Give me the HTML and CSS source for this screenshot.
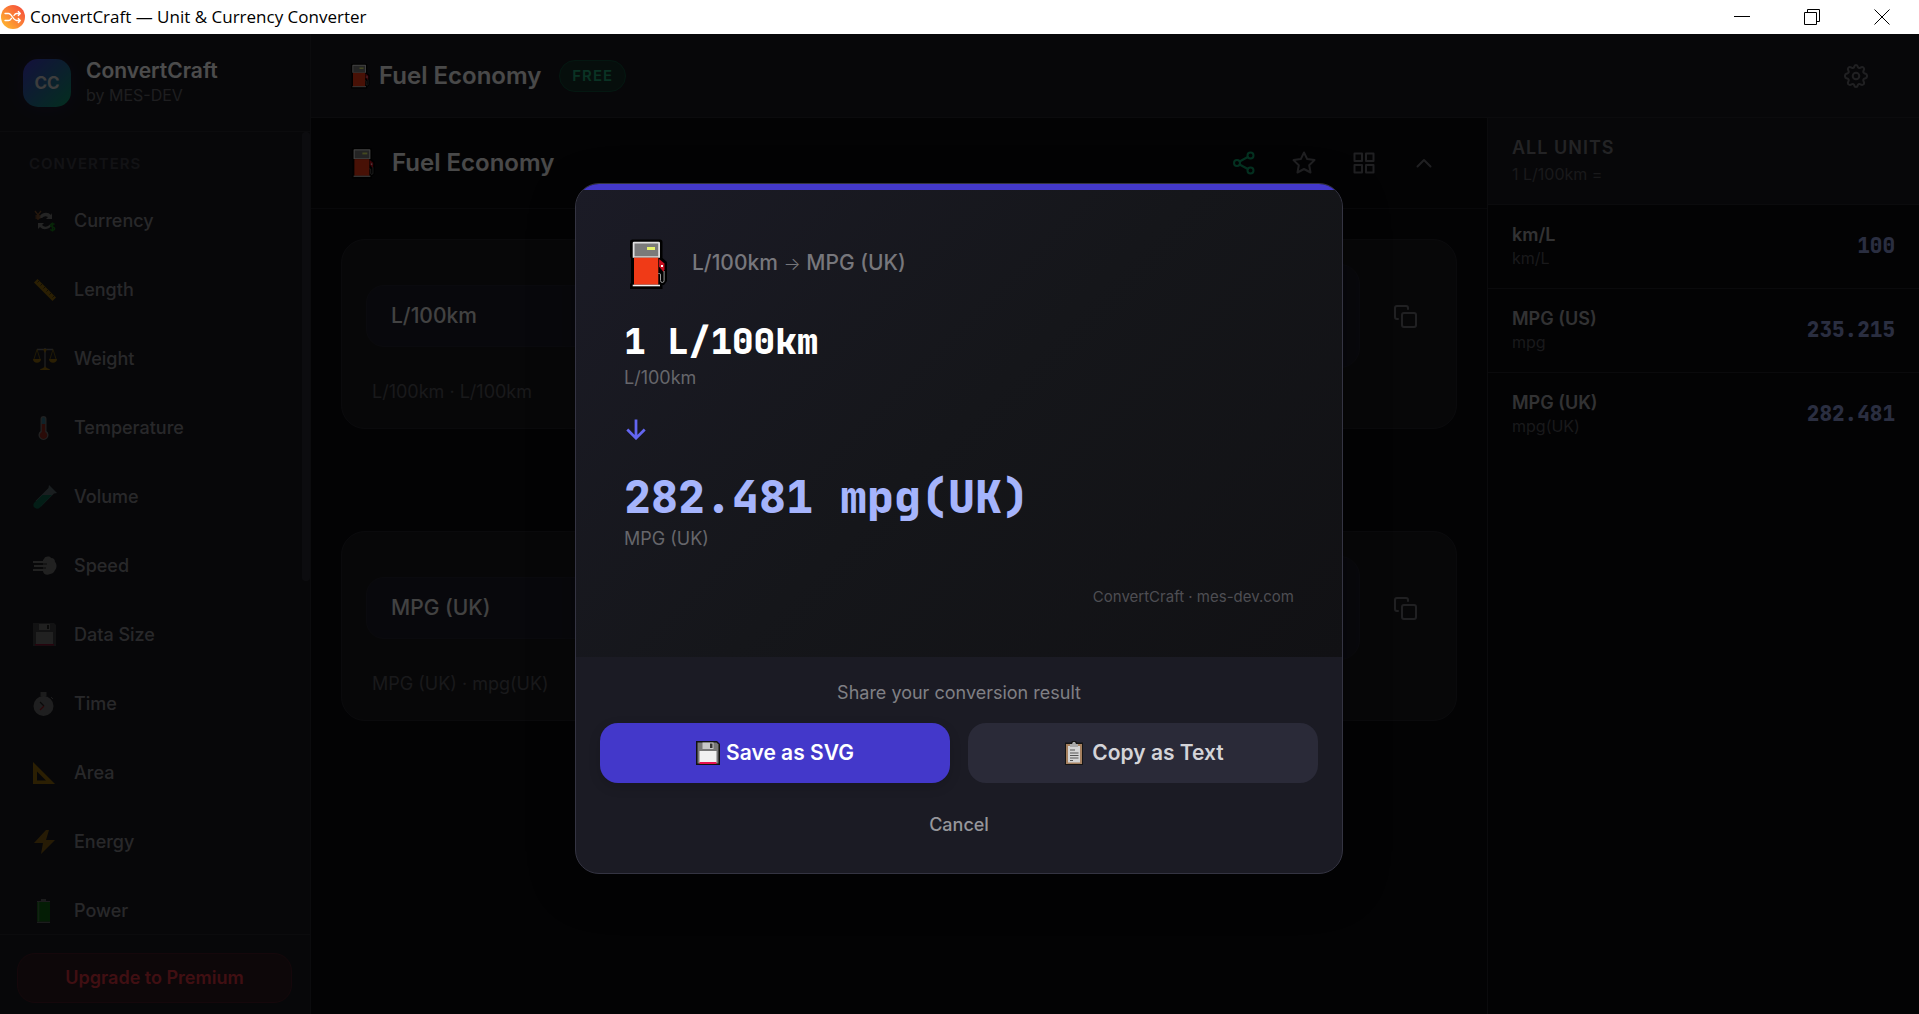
FILE: index.html
```html
<!DOCTYPE html>
<html lang="en">
<head>
    <meta charset="UTF-8">
    <meta name="viewport" content="width=device-width, initial-scale=1.0">
    <title>ConvertCraft — Unit &amp; Currency Converter</title>
    <link rel="stylesheet" href="styles.css">
</head>
<body>
    <svg class="defs" width="0" height="0" aria-hidden="true">
        <symbol id="pump" viewBox="0 0 48 52">
            <path d="M9 1.500h27a2.500 2.500 0 0 1 2.500 2.500v16l4.500 4v19l-3 4h-1.500v4H6v-5l1-1V20l-1-1V4a2.500 2.500 0 0 1 3-2.500z" fill="#000"/>
            <path d="M8.700 5a1.300 1.300 0 0 1 1.300-1.300h24.700A1.300 1.300 0 0 1 36 5v14.700H8.700z" fill="#dedede"/>
            <path d="M10.500 5.500h23.700v12.800H10.500z" fill="#7a7a7a"/>
            <path d="M23 9h8v3h-8z" fill="#e5f36b"/>
            <path d="M10 19.700h24.300v27H10z" fill="#f03a17"/>
            <path d="M8.700 46.700H36v1.600H8.700z" fill="#eee"/>
            <path d="M35 21l5.500 4.500v6L39.500 34 35 28.500z" fill="#c50f1f"/>
            <path d="M37 27h2v2h-2z" fill="#fff"/>
            <path d="M34.300 35.500h1.200q1 0 1 1.500v5.500q0 2 1.800 2t1.800-2V33" fill="none" stroke="#999" stroke-width="1"/>
        </symbol>
        <symbol id="floppy" viewBox="0 0 24 24">
            <path d="M0 0h21l3 3v21H0z" fill="#111"/>
            <path d="M1.500 1.500h19l2 2v19h-21z" fill="#777"/>
            <path d="M6.500 1.500h11V8h-11z" fill="#c8c8c8"/>
            <path d="M14 2.500h2.500v4.500H14z" fill="#333"/>
            <path d="M3.500 10h17v12h-17z" fill="#f2f2f2"/>
            <path d="M3.500 21h17v2h-17z" fill="#e8114f"/>
        </symbol>
        <symbol id="clipboard" viewBox="0 0 24 24">
            <path d="M3 1.500h6l1-1.500h4l1 1.500h6V24H3z" fill="#151515"/>
            <path d="M4 3h16v20H4z" fill="#a5805f"/>
            <path d="M6 5h12v16.500H6z" fill="#d4d4d4"/>
            <path d="M8 3h2l1-2h2l1 2h2v3H8z" fill="#aaa"/>
            <path d="M8 9h5M8 12h8.500M8 14.500h8.500M8 17h8.500M8 19.500h3" stroke="#555" stroke-width="1.200"/>
        </symbol>
        <symbol id="copy" viewBox="0 0 24 24">
            <rect x="9" y="9" width="14" height="14" rx="2"/>
            <path d="M5 15H4a2 2 0 0 1-2-2V4a2 2 0 0 1 2-2h9a2 2 0 0 1 2 2v1"/>
        </symbol>
    </svg>

    <header class="titlebar">
        <svg class="app-icon" viewBox="0 0 24 24" width="24" height="24">
            <defs>
                <linearGradient id="appGrad" x1="0" y1="1" x2="1" y2="0">
                    <stop offset="0" stop-color="#ffc22e"/>
                    <stop offset="0.5" stop-color="#fb8236"/>
                    <stop offset="1" stop-color="#f4433c"/>
                </linearGradient>
            </defs>
            <circle cx="12" cy="12" r="12" fill="url(#appGrad)"/>
            <path d="M4 8.500h3.500c3.500 0 4.500 7 8 7H19M4 15.500h3.500c1.300 0 2.200-1 2.900-2.200M13 10.500c.7-1.100 1.500-2 2.500-2H19M17.300 6.500l2 2-2 2M17.300 13.500l2 2-2 2" fill="none" stroke="#fff" stroke-width="1.300" stroke-linecap="round" stroke-linejoin="round"/>
        </svg>
        <span class="window-title">ConvertCraft — Unit &amp; Currency Converter</span>
        <div class="window-controls">
            <button type="button" aria-label="Minimize"><svg viewBox="0 0 16 16" width="16" height="16"><path d="M0 7.500h16"/></svg></button>
            <button type="button" aria-label="Restore"><svg viewBox="0 0 16 16" width="16" height="16"><path d="M.5 3.500h12v12H.5zM3.500 3.500v-3h12v12h-3"/></svg></button>
            <button type="button" aria-label="Close"><svg viewBox="0 0 16 16" width="16" height="16"><path d="M.5.5l15 15M15.500.5l-15 15"/></svg></button>
        </div>
    </header>

    <div class="app">
        <aside class="sidebar">
            <div class="brand">
                <div class="brand-logo">CC</div>
                <div>
                    <div class="brand-name">ConvertCraft</div>
                    <div class="brand-by">by MES-DEV</div>
                </div>
            </div>
            <nav class="nav">
                <h2 class="nav-title">Converters</h2>
                <a class="nav-item" href="#currency">
                    <svg viewBox="0 0 24 24"><path d="M6 9a7 7 0 0 1 12-3l1-2v6h-6l2-2a5 5 0 0 0-6 1zM19 14a7 7 0 0 1-12 4l-2 2v-6h6l-2 2a5 5 0 0 0 6 1z" fill="#999"/><path d="M2 2l3 4 3-4M5 6v5M2.500 7h5M2.500 9h5" stroke="#a0622d" stroke-width="1.300" fill="none"/><path d="M21.500 15.500c-1-1.200-4-1-4 .8 0 2.200 4.200 1.200 4.200 3.400 0 2-3.400 2-4.400.7M19.500 13.500v9" stroke="#16a316" stroke-width="1.400" fill="none"/></svg>
                    Currency
                </a>
                <a class="nav-item" href="#length">
                    <svg viewBox="0 0 24 24"><path d="M1 4.500L4.500 1 23 19.500 19.500 23z" fill="#b88505"/><path d="M6 3L4.500 4.500M9 6L7.500 7.500M12 9l-1.500 1.500M15 12l-1.500 1.500M18 15l-1.500 1.500M21 18l-1.500 1.500" stroke="#493500"/></svg>
                    Length
                </a>
                <a class="nav-item" href="#weight">
                    <svg viewBox="0 0 24 24"><path d="M12 1v20M4 2.500h16" stroke="#8a8a8a" stroke-width="1.300"/><path d="M4 2.500L1 12M4 2.500L7 12M20 2.500L17 12M20 2.500l3 9.500" stroke="#a0790a" stroke-width=".8"/><path d="M0 12h8c0 5-8 5-8 0zM16 12h8c0 5-8 5-8 0zM7 23c0-2 4-1 5-4 1 3 5 2 5 4zM10 2h4l-2 4z" fill="#b88505"/></svg>
                    Weight
                </a>
                <a class="nav-item" href="#temperature">
                    <svg viewBox="0 0 24 24"><path d="M7.500 3a3 3 0 0 1 6 0v12a5 5 0 1 1-6 0z" fill="#8c8c8c"/><path d="M8.800 3a1.700 1.700 0 0 1 3.400 0v5H8.800z" fill="#3f93ad"/><path d="M8.800 8h3.400v8a3.700 3.700 0 1 1-3.400 0z" fill="#b32a1b"/></svg>
                    Temperature
                </a>
                <a class="nav-item" href="#volume">
                    <svg viewBox="0 0 24 24"><path d="M16 0l8 8-3 .5L8 21.500 2.500 16 15.500 3z" fill="#6d8288"/><path d="M9.500 10h9.500L7 22.500c-4 3.500-9-1.500-5.500-5z" fill="#087a5c"/></svg>
                    Volume
                </a>
                <a class="nav-item" href="#speed">
                    <svg viewBox="0 0 24 24"><path d="M11 5c1-3 6-3 7-1 3 0 4 2 4 4 2 2 2 6 0 8-1 3-4 4-5 4-3 2-7 0-7-3V6z" fill="#8b8b8b"/><path d="M0 8h12M1 12h13M0 16h12" stroke="#8b8b8b" stroke-width="2"/><path d="M1 10h13M1 14h12" stroke="#222" stroke-width="1"/></svg>
                    Speed
                </a>
                <a class="nav-item" href="#data">
                    <svg viewBox="0 0 24 24"><path d="M0 0h21l2 2v21H0z" fill="#4b4b4b"/><path d="M6 1h11v6H6z" fill="#888"/><path d="M14 2h2v4h-2z" fill="#222"/><path d="M3 9h17v12H3z" fill="#8d8d8d"/><path d="M2 21h19v1.500H2z" fill="#a30d38"/></svg>
                    Data Size
                </a>
                <a class="nav-item" href="#time">
                    <svg viewBox="0 0 24 24"><path d="M8 0h5v4H8zM18 5l2 2" stroke="#777" fill="#777"/><circle cx="10.500" cy="14" r="10" fill="#858585"/><path d="M7 10l4 4" stroke="#222" stroke-width="1.200"/><path d="M11 14l-4 4" stroke="#b4151f" stroke-width="1.200"/></svg>
                    Time
                </a>
                <a class="nav-item" href="#area">
                    <svg viewBox="0 0 24 24"><path d="M0 1l22 22H0zM4 10.500V19.500h9z" fill="#b88505" fill-rule="evenodd"/></svg>
                    Area
                </a>
                <a class="nav-item" href="#energy">
                    <svg viewBox="0 0 24 24"><path d="M13 0L1 13h9l-2 11L22 10h-9l3-10z" fill="#a4720f"/></svg>
                    Energy
                </a>
                <a class="nav-item" href="#power">
                    <svg viewBox="0 0 24 24"><path d="M8 0h5v2h4v1.500H4V2h4zM4 22.500h13V24H4z" fill="#777"/><path d="M4 3h13v19.500H4z" fill="#0c7a10"/><path d="M5.500 3v19.500" stroke="#4c8d4e" stroke-width="1.500"/></svg>
                    Power
                </a>
                <div class="scroll-thumb"></div>
            </nav>
            <div class="sidebar-foot">
                <button class="upgrade" type="button">Upgrade to Premium</button>
            </div>
        </aside>

        <div class="content">
            <header class="topbar">
                <svg class="pump-sm"><use href="#pump"/></svg>
                <h1 class="title">Fuel Economy</h1>
                <span class="badge">FREE</span>
                <button class="icon-btn settings" type="button" aria-label="Settings">
                    <svg viewBox="0 0 24 24" width="24" height="24"><path d="M12 1c1 0 1.600.7 1.800 1.700.2 1.100 1.300 1.600 2.300 1.100l1.300-.6c1.700-.5 3 .8 2.600 2.500l-.6 1.500c-.4 1 .2 2 1.200 2.200l1 .3c1.900.8 1.900 3.800 0 4.600l-1 .3c-1 .2-1.600 1.200-1.200 2.200l.6 1.500c.4 1.700-.9 3-2.600 2.500l-1.300-.6c-1-.5-2.100 0-2.300 1.100C13.600 22.300 13 23 12 23s-1.600-.7-1.800-1.700c-.2-1.100-1.300-1.600-2.300-1.100l-1.300.6c-1.700.5-3-.8-2.600-2.500l.6-1.500c.4-1-.2-2-1.200-2.200l-1-.3c-1.900-.8-1.900-3.800 0-4.600l1-.3c1-.2 1.600-1.200 1.200-2.200L4 5.700c-.4-1.700.9-3 2.600-2.500l1.300.6c1 .5 2.100 0 2.300-1.100C10.400 1.700 11 1 12 1z"/><circle cx="12" cy="12" r="3.300"/></svg>
                </button>
            </header>

            <div class="workspace">
                <main class="converter">
                    <div class="converter-head">
                        <svg class="pump-md"><use href="#pump"/></svg>
                        <h2 class="title">Fuel Economy</h2>
                        <div class="tools">
                            <button class="icon-btn share" type="button" aria-label="Share">
                                <svg viewBox="0 0 24 24" width="24" height="24"><circle cx="18.500" cy="4.500" r="3"/><circle cx="5" cy="12" r="3"/><circle cx="18.500" cy="19.500" r="3"/><path d="M7.600 10.500l8.200-4.500M7.600 13.500l8.200 4.500"/></svg>
                            </button>
                            <button class="icon-btn" type="button" aria-label="Favorite">
                                <svg viewBox="0 0 24 24" width="24" height="24"><path d="M12 1.500l3.200 6.600 7.300 1-5.300 5.100 1.300 7.300-6.500-3.500-6.500 3.500 1.300-7.300-5.300-5.100 7.300-1z"/></svg>
                            </button>
                            <button class="icon-btn" type="button" aria-label="Grid view">
                                <svg viewBox="0 0 24 24" width="24" height="24"><path d="M2.500 2.500H10V10H2.500zM14 2.500h7.500V10H14zM2.500 14H10v7.500H2.500zM14 14h7.500v7.500H14z"/></svg>
                            </button>
                            <button class="icon-btn" type="button" aria-label="Collapse">
                                <svg viewBox="0 0 24 24" width="24" height="24"><path d="M5.500 15.500L12 9l6.500 6.500"/></svg>
                            </button>
                        </div>
                    </div>

                    <div class="cards">
                        <section class="card">
                            <div class="card-row">
                                <select class="unit" aria-label="From unit"><option>L/100km</option><option>MPG (UK)</option></select>
                                <input class="amount" type="text" value="1" aria-label="From value">
                                <button class="icon-btn copy" type="button" aria-label="Copy value"><svg width="24" height="24"><use href="#copy"/></svg></button>
                            </div>
                            <p class="card-note">L/100km · L/100km</p>
                        </section>
                        <section class="card">
                            <div class="card-row">
                                <select class="unit" aria-label="To unit"><option>MPG (UK)</option><option>L/100km</option></select>
                                <input class="amount" type="text" value="282.481" aria-label="To value" readonly>
                                <button class="icon-btn copy" type="button" aria-label="Copy value"><svg width="24" height="24"><use href="#copy"/></svg></button>
                            </div>
                            <p class="card-note">MPG (UK) · mpg(UK)</p>
                        </section>
                    </div>
                </main>

                <aside class="units">
                    <div class="units-head">
                        <h2>ALL UNITS</h2>
                        <p>1 L/100km =</p>
                    </div>
                    <ul class="units-list">
                        <li><div><strong>km/L</strong><span>km/L</span></div><b>100</b></li>
                        <li><div><strong>MPG (US)</strong><span>mpg</span></div><b>235.215</b></li>
                        <li><div><strong>MPG (UK)</strong><span>mpg(UK)</span></div><b>282.481</b></li>
                    </ul>
                </aside>
            </div>
        </div>

        <div class="overlay">
            <div class="modal" role="dialog" aria-label="Share your conversion result">
                <div class="preview">
                    <div class="preview-head">
                        <svg class="pump-lg"><use href="#pump"/></svg>
                        <span>L/100km <span class="to-arrow">→</span> MPG (UK)</span>
                    </div>
                    <div class="from-value">1 L/100km</div>
                    <div class="unit-name">L/100km</div>
                    <svg class="arrow" viewBox="0 0 24 24" width="24" height="24"><path d="M12 1.500v20M2.500 12.500l9.500 9.500 9.500-9.500"/></svg>
                    <div class="to-value">282.481 mpg(UK)</div>
                    <div class="unit-name">MPG (UK)</div>
                    <div class="watermark">ConvertCraft · mes-dev.com</div>
                </div>
                <div class="modal-foot">
                    <p>Share your conversion result</p>
                    <div class="actions">
                        <button class="btn primary" type="button"><svg width="24" height="24"><use href="#floppy"/></svg>Save as SVG</button>
                        <button class="btn" type="button"><svg width="24" height="24"><use href="#clipboard"/></svg>Copy as Text</button>
                    </div>
                    <button class="cancel" type="button">Cancel</button>
                </div>
            </div>
        </div>
    </div>
</body>
</html>
```
FILE: styles.css
```css
* {
    box-sizing: border-box;
}
body {
    margin: 0;
    height: 100vh;
    display: flex;
    flex-direction: column;
    overflow: hidden;
    background: #0a0a0f;
    color: #fff;
    font-family: Inter, "Liberation Sans", sans-serif;
    font-size: 18px;
    line-height: 24px;
}
h1, h2, p, ul {
    margin: 0;
    padding: 0;
}
button, input, select {
    font: inherit;
    color: inherit;
    border: none;
    background: none;
    padding: 0;
}
svg {
    flex: none;
}
.defs {
    position: absolute;
}

/* window title bar */
.titlebar {
    display: flex;
    align-items: center;
    gap: 5px;
    flex: none;
    height: 34px;
    padding-left: 1px;
    background: #fff;
    color: #000;
}
.window-title {
    font-family: "Segoe UI", "Open Sans", sans-serif;
    font-size: 17px;
}
.window-controls {
    display: flex;
    margin-left: auto;
    padding-right: 2px;
}
.window-controls button {
    width: 70px;
    height: 34px;
    display: grid;
    place-items: center;
}
.window-controls path {
    fill: none;
    stroke: #000;
}

.app {
    position: relative;
    flex: 1;
    min-height: 0;
    display: flex;
}

/* sidebar */
.sidebar {
    width: 311px;
    flex: none;
    display: flex;
    flex-direction: column;
    background: #19191f;
    border-right: 1px solid #26262d;
}
.brand {
    display: flex;
    align-items: center;
    gap: 15px;
    height: 98px;
    padding: 0 23px;
    border-bottom: 1px solid #26262d;
}
.brand-logo {
    width: 48px;
    height: 48px;
    display: grid;
    place-items: center;
    border-radius: 15px;
    background: linear-gradient(135deg, #4338ca, #0b9a68);
    box-shadow: 0 0 24px rgba(67, 56, 202, 0.2);
    font-size: 17px;
    font-weight: 700;
    color: #ccc;
}
.brand-name {
    font-size: 21px;
    font-weight: 600;
}
.brand-by {
    font-size: 16px;
    color: #66666c;
}
.nav {
    position: relative;
    flex: 1;
    min-height: 0;
    overflow: hidden;
    padding: 20px 12px 0;
}
.nav-title {
    padding-left: 17px;
    margin-bottom: 10px;
    font-size: 15px;
    font-weight: 600;
    line-height: 24px;
    letter-spacing: 1px;
    text-transform: uppercase;
    color: #3e3e46;
}
.nav-item {
    display: flex;
    align-items: center;
    gap: 17px;
    height: 69px;
    padding-left: 21px;
    color: #88888e;
    font-weight: 500;
    text-decoration: none;
}
.nav-item svg {
    width: 24px;
    height: 24px;
    opacity: 0.75;
}
.scroll-thumb {
    position: absolute;
    top: 0;
    right: 0;
    width: 8px;
    height: 56%;
    border-radius: 4px;
    background: #2a2a35;
}
.sidebar-foot {
    padding: 18px 18px 11px 17px;
    border-top: 1px solid #26262d;
}
.upgrade {
    width: 100%;
    height: 50px;
    border: 1px solid #471a26;
    border-radius: 18px;
    background: #2c1820;
    color: #d8323f;
    font-weight: 600;
}

/* top bar and converter */
.content {
    flex: 1;
    min-width: 0;
    display: flex;
    flex-direction: column;
}
.topbar {
    display: flex;
    align-items: center;
    flex: none;
    height: 84px;
    padding: 0 39px 0 37px;
    background: #19191f;
    border-bottom: 1px solid #26262d;
}
.title {
    font-size: 24px;
    font-weight: 600;
    line-height: 32px;
    color: #f5f5f5;
}
.pump-sm {
    width: 24px;
    height: 26px;
    margin-right: 7px;
}
.pump-md {
    width: 30px;
    height: 32px;
    margin-right: 14px;
}
.pump-lg {
    width: 48px;
    height: 52px;
}
.badge {
    margin-left: 18px;
    padding: 3px 12px;
    border: 1px solid #0e4f3a;
    border-radius: 16px;
    background: #162f28;
    color: #22a878;
    font-size: 15px;
    font-weight: 600;
    letter-spacing: 1px;
}
.icon-btn {
    width: 48px;
    height: 48px;
    display: grid;
    place-items: center;
    color: #6c6c72;
}
.icon-btn svg {
    fill: none;
    stroke: currentColor;
    stroke-width: 2;
    stroke-linejoin: round;
    stroke-linecap: round;
}
.settings {
    margin-left: auto;
}
.workspace {
    flex: 1;
    min-height: 0;
    display: flex;
}
.converter {
    flex: 1;
    min-width: 0;
}
.converter-head {
    display: flex;
    align-items: center;
    height: 91px;
    padding: 0 39px 0 37px;
    border-bottom: 1px solid #1d1d24;
}
.tools {
    display: flex;
    gap: 12px;
    margin-left: auto;
}
.share {
    color: #10a870;
}
.cards {
    display: flex;
    flex-direction: column;
    gap: 102px;
    padding: 30px;
}
.card {
    padding: 24px;
    border: 1px solid #24242b;
    border-radius: 24px;
    background: #19191d;
}
.card-row {
    display: flex;
    align-items: center;
    gap: 18px;
}
.unit {
    width: 270px;
    height: 62px;
    padding: 0 24px;
    appearance: none;
    border: 1px solid #24242f;
    border-radius: 18px;
    background: #1c1c28;
    color: #ddd;
    font-size: 21px;
    font-weight: 500;
}
.amount {
    flex: 1;
    min-width: 0;
    height: 104px;
    padding: 0 24px;
    border: 1px solid #24242f;
    border-radius: 20px;
    background: #1c1c28;
    font-size: 36px;
}
.copy {
    width: 54px;
}
.card-note {
    margin-top: 12px;
    padding-left: 6px;
    color: #54545a;
}

/* all units panel */
.units {
    width: 432px;
    flex: none;
    border-left: 1px solid #26262d;
}
.units-head {
    height: 87px;
    padding: 18px 24px;
    background: #19191f;
    border-bottom: 1px solid #26262d;
}
.units-head h2 {
    font-size: 18px;
    font-weight: 600;
    line-height: 24px;
    letter-spacing: 1px;
    color: #77777d;
}
.units-head p {
    font-size: 16px;
    line-height: 28px;
    color: #54545a;
}
.units-list {
    list-style: none;
}
.units-list li {
    display: flex;
    align-items: center;
    justify-content: space-between;
    height: 84px;
    padding: 0 24px 2px;
    border-bottom: 1px solid #24242b;
}
.units-list li:last-child {
    border-bottom: none;
}
.units-list strong {
    display: block;
    font-weight: 600;
    color: #a8a8ac;
}
.units-list span {
    display: block;
    font-size: 16px;
    line-height: 22px;
    color: #54545a;
}
.units-list b {
    font-family: "JetBrains Mono", "DejaVu Sans Mono", monospace;
    font-size: 21px;
    font-weight: 800;
    color: #a5b4fc;
    opacity: 0.85;
}

/* share dialog */
.overlay {
    position: absolute;
    inset: 0;
    display: grid;
    place-items: center;
    padding: 8px 1px 0 0;
    background: rgba(0, 0, 0, 0.7);
}
.modal {
    width: 768px;
    max-width: 90%;
    overflow: hidden;
    border: 1px solid #343442;
    border-radius: 24px;
    background: #1b1b24;
    box-shadow: 0 12px 48px rgba(0, 0, 0, 0.3);
}
.preview {
    padding: 48px;
    border-top: 6px solid #4338ca;
    background: linear-gradient(135deg, #1b1b26 0%, #15161a 50%, #111114 100%);
}
.preview-head {
    display: flex;
    align-items: center;
    gap: 20px;
    margin-bottom: 26px;
    font-size: 21px;
    font-weight: 500;
    color: #77777c;
}
.to-arrow {
    font-size: 18px;
    font-weight: 300;
}
.from-value, .to-value {
    font-family: "JetBrains Mono", "DejaVu Sans Mono", monospace;
    font-weight: 800;
}
.from-value {
    font-size: 36px;
    line-height: 50px;
}
.to-value {
    font-size: 45px;
    line-height: 60px;
    color: #a5b4fc;
}
.unit-name {
    color: #66666b;
}
.arrow {
    display: block;
    margin: 27px 0 26px;
    padding: 1px;
    fill: none;
    stroke: #6366f1;
    stroke-width: 3;
}
.watermark {
    margin-top: 34px;
    font-size: 15px;
    text-align: right;
    color: #4e4e53;
}
.modal-foot {
    padding: 24px 24px 18px;
    text-align: center;
    color: #808085;
}
.actions {
    display: flex;
    gap: 18px;
    margin: 18px 0 12px;
}
.btn {
    flex: 1;
    display: flex;
    align-items: center;
    justify-content: center;
    gap: 6px;
    height: 60px;
    border-radius: 18px;
    background: #2a2a38;
    color: #d4d4d8;
    font-size: 21px;
    font-weight: 600;
}
.btn.primary {
    background: #4338ca;
    color: #fff;
    box-shadow: 0 4px 12px rgba(0, 0, 0, 0.15);
}
.cancel {
    width: 100%;
    height: 60px;
    color: #96969b;
    font-weight: 500;
}
```
